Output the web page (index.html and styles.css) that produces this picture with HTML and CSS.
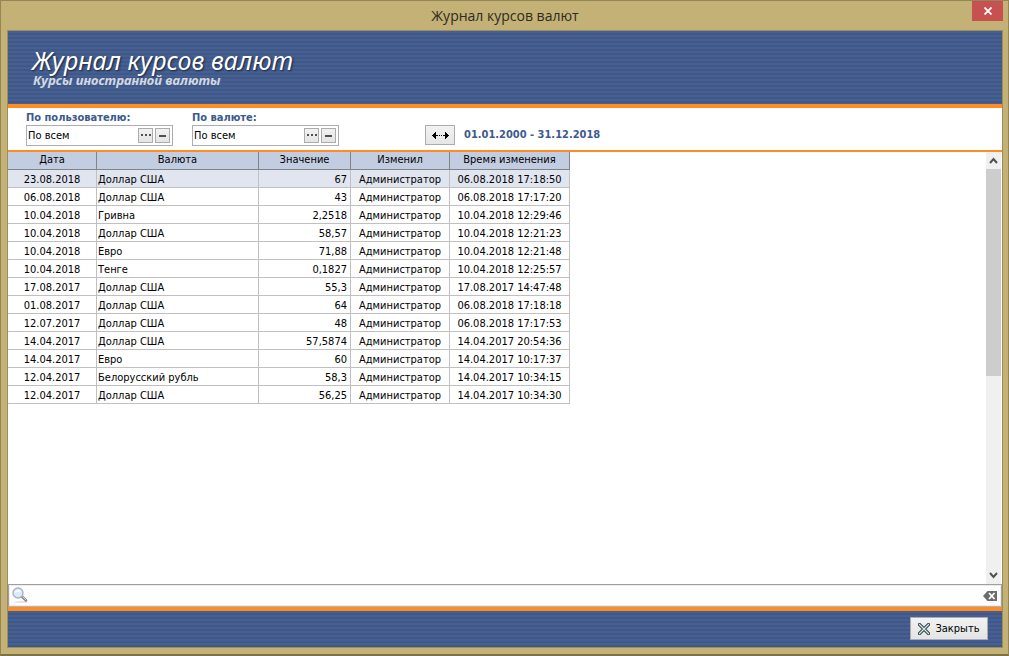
FILE: index.html
```
<!DOCTYPE html>
<html lang="ru">
<head>
<meta charset="utf-8">
<title>Журнал курсов валют</title>
<link rel="stylesheet" href="styles.css">
</head>
<body>
<div class="window">
  <header class="titlebar">
    <h1 class="titlebar-text">Журнал курсов валют</h1>
    <button class="window-close" type="button" aria-label="Закрыть окно">
      <svg width="8" height="8" viewBox="0 0 8 8"><path d="M0.5 0.5L7.5 7.5M7.5 0.5L0.5 7.5" stroke="#fff" stroke-width="1.800" fill="none"/></svg>
    </button>
  </header>
  <main class="client">
    <section class="banner stripes">
      <h2 class="banner-title">Журнал курсов валют</h2>
      <p class="banner-subtitle">Курсы иностранной валюты</p>
    </section>
    <form class="filters">
      <div class="filter">
        <label class="filter-label" for="user">По пользователю:</label>
        <div class="picker">
          <input class="picker-input" id="user" type="text" value="По всем">
          <button class="picker-button" type="button" aria-label="Выбрать пользователя"><svg width="11" height="3" viewBox="0 0 11 3"><path d="M1 0h2v2H1zM5 0h2v2H5zM9 0h2v2H9z" fill="#505050"/></svg></button>
          <button class="picker-button" type="button" aria-label="Сбросить пользователя"><svg width="7" height="2" viewBox="0 0 7 2"><path d="M0 0h7v2H0z" fill="#505050"/></svg></button>
        </div>
      </div>
      <div class="filter">
        <label class="filter-label" for="currency">По валюте:</label>
        <div class="picker">
          <input class="picker-input" id="currency" type="text" value="По всем">
          <button class="picker-button" type="button" aria-label="Выбрать валюту"><svg width="11" height="3" viewBox="0 0 11 3"><path d="M1 0h2v2H1zM5 0h2v2H5zM9 0h2v2H9z" fill="#505050"/></svg></button>
          <button class="picker-button" type="button" aria-label="Сбросить валюту"><svg width="7" height="2" viewBox="0 0 7 2"><path d="M0 0h7v2H0z" fill="#505050"/></svg></button>
        </div>
      </div>
      <div class="period">
        <button class="period-button" type="button" aria-label="Выбрать период"><svg width="17" height="7" viewBox="0 0 17 7" shape-rendering="crispEdges"><path d="M0 3h1v1H0zM1 2h1v3H1zM2 1h1v5H2zM3 0h1v7H3zM4 3h2v1H4zM7 3h1v1H7zM9 3h1v1H9zM11 3h2v1h-2zM13 0h1v7h-1zM14 1h1v5h-1zM15 2h1v3h-1zM16 3h1v1h-1z" fill="#000"/></svg></button>
        <span class="period-text">01.01.2000 - 31.12.2018</span>
      </div>
    </form>
    <section class="grid">
      <div class="grid-body">
        <table class="rates">
          <colgroup><col class="col-date"><col class="col-currency"><col class="col-value"><col class="col-user"><col class="col-time"></colgroup>
          <thead><tr><th>Дата</th><th>Валюта</th><th>Значение</th><th>Изменил</th><th>Время изменения</th></tr></thead>
          <tbody>
            <tr class="selected"><td>23.08.2018</td><td>Доллар США</td><td>67</td><td>Администратор</td><td>06.08.2018 17:18:50</td></tr>
            <tr><td>06.08.2018</td><td>Доллар США</td><td>43</td><td>Администратор</td><td>06.08.2018 17:17:20</td></tr>
            <tr><td>10.04.2018</td><td>Гривна</td><td>2,2518</td><td>Администратор</td><td>10.04.2018 12:29:46</td></tr>
            <tr><td>10.04.2018</td><td>Доллар США</td><td>58,57</td><td>Администратор</td><td>10.04.2018 12:21:23</td></tr>
            <tr><td>10.04.2018</td><td>Евро</td><td>71,88</td><td>Администратор</td><td>10.04.2018 12:21:48</td></tr>
            <tr><td>10.04.2018</td><td>Тенге</td><td>0,1827</td><td>Администратор</td><td>10.04.2018 12:25:57</td></tr>
            <tr><td>17.08.2017</td><td>Доллар США</td><td>55,3</td><td>Администратор</td><td>17.08.2017 14:47:48</td></tr>
            <tr><td>01.08.2017</td><td>Доллар США</td><td>64</td><td>Администратор</td><td>06.08.2018 17:18:18</td></tr>
            <tr><td>12.07.2017</td><td>Доллар США</td><td>48</td><td>Администратор</td><td>06.08.2018 17:17:53</td></tr>
            <tr><td>14.04.2017</td><td>Доллар США</td><td>57,5874</td><td>Администратор</td><td>14.04.2017 20:54:36</td></tr>
            <tr><td>14.04.2017</td><td>Евро</td><td>60</td><td>Администратор</td><td>14.04.2017 10:17:37</td></tr>
            <tr><td>12.04.2017</td><td>Белорусский рубль</td><td>58,3</td><td>Администратор</td><td>14.04.2017 10:34:15</td></tr>
            <tr><td>12.04.2017</td><td>Доллар США</td><td>56,25</td><td>Администратор</td><td>14.04.2017 10:34:30</td></tr>
          </tbody>
        </table>
      </div>
      <div class="scrollbar">
        <button class="scroll-arrow" type="button" aria-label="Прокрутить вверх"><svg width="9" height="7" viewBox="0 0 9 7"><path d="M1 6L4.500 2L8 6" stroke="#505050" stroke-width="2" fill="none"/></svg></button>
        <div class="scroll-track"><div class="scroll-thumb"></div></div>
        <button class="scroll-arrow" type="button" aria-label="Прокрутить вниз"><svg width="9" height="7" viewBox="0 0 9 7"><path d="M1 1L4.500 5L8 1" stroke="#505050" stroke-width="2" fill="none"/></svg></button>
      </div>
    </section>
    <div class="search">
      <label class="search-icon" for="search" aria-label="Поиск"><svg width="17" height="17" viewBox="0 0 17 17"><ellipse cx="9" cy="15" rx="7" ry="1.200" fill="#e6e6e6"/><path d="M10 9.500L14 13.500" stroke="#8a8a8a" stroke-width="2.600" stroke-linecap="round"/><path d="M10.500 9.500L14 13" stroke="#d0d0d0" stroke-width="1"/><circle cx="6" cy="6" r="5" fill="#d8ebfa" stroke="#aab2bc" stroke-width="1.400"/><path d="M2.500 6Q2.500 3 6 2.500Q9.500 3 9.500 5.500Q6 4.500 2.500 6" fill="#f1f8fe"/></svg></label>
      <input class="search-input" id="search" type="text">
      <button class="search-clear" type="button" aria-label="Очистить"><svg width="14" height="10" viewBox="0 0 14 10"><path d="M0 5L4.500 0H14V10H4.500Z" fill="#6c6c6c"/><path d="M6 2L11.500 8M11.500 2L6 8" stroke="#fff" stroke-width="1.800"/></svg></button>
    </div>
    <footer class="footer stripes">
      <button class="close-button" type="button">
        <svg width="12" height="12" viewBox="0 0 12 12"><path d="M1.500 1.500L10.500 10.500M10.500 1.500L1.500 10.500" stroke="#33484c" stroke-width="3.200" stroke-linecap="round"/><path d="M1.500 1.500L10.500 10.500M10.500 1.500L1.500 10.500" stroke="#d5e6e8" stroke-width="1.200" stroke-linecap="round"/></svg>
        Закрыть
      </button>
    </footer>
  </main>
</div>
</body>
</html>
```
FILE: styles.css
```
* { box-sizing: border-box; }

body {
  margin: 0;
  font: 11px/14px "DejaVu Sans Condensed", "DejaVu Sans", sans-serif;
  color: #000;
}

button, input { font: inherit; color: inherit; margin: 0; padding: 0; }
button { display: flex; align-items: center; justify-content: center; }
svg { display: block; flex: none; }

.window {
  display: flex;
  flex-direction: column;
  min-height: 100vh;
  padding: 0 5px 6px 6px;
  background: #c4b175;
  border: 1px solid #938556;
  border-bottom: 2px solid #7c704a;
}

.titlebar {
  display: grid;
  grid-template-columns: 1fr auto 1fr;
  height: 29px;
}

.titlebar-text {
  grid-column: 2;
  margin: 0;
  font: 14px/30px "Open Sans", "Noto Sans", sans-serif;
  color: #2c2a24;
}

.window-close {
  justify-self: end;
  width: 31px;
  height: 20px;
  border: 0;
  background: #c75050;
}

.client {
  flex: 1;
  display: flex;
  flex-direction: column;
  background: #fff;
  border: 1px solid #9c8d5c;
}

.stripes {
  background: repeating-linear-gradient(#466093 0 2px, #405886 2px 4px);
}

.banner {
  height: 77px;
  padding: 15px 24px 0;
  border-bottom: 4px solid #ff8c22;
}

.banner-title, .banner-subtitle {
  margin: 0;
  font-family: "Noto Sans", "Open Sans", sans-serif;
  font-style: italic;
}

.banner-title {
  font-size: 25px;
  line-height: 28px;
  font-weight: 400;
  color: #fff;
  text-shadow: 1px 1px 2px #14233f;
}

.banner-subtitle {
  padding-left: 1px;
  font-size: 13px;
  line-height: 12px;
  font-weight: 700;
  color: #d3d8e2;
}

.filters {
  display: flex;
  gap: 19px;
  height: 44px;
  padding: 3px 18px 0;
  border-bottom: 2px solid #ff8c22;
}

.filter { width: 147px; }

.filter-label, .period-text { font-weight: 700; color: #3b5a8e; }
.filter-label { display: block; white-space: nowrap; }

.picker {
  display: flex;
  align-items: center;
  gap: 2px;
  height: 21px;
  padding: 0 2px 0 1px;
  border: 1px solid #abadb3;
}

.picker-input {
  flex: 1;
  min-width: 0;
  border: 0;
  background: none;
}

.picker-button {
  width: 15px;
  height: 15px;
  border: 1px solid #acacac;
  background: linear-gradient(#f2f2f2, #e4e4e4);
}

.period {
  display: flex;
  align-items: center;
  gap: 9px;
  height: 20px;
  margin: 14px 0 0 67px;
}

.period-button {
  width: 30px;
  height: 20px;
  border: 1px solid #acacac;
  background: linear-gradient(#f2f2f2, #e6e6e6);
}

.grid { flex: 1; display: flex; padding-right: 1px; }
.grid-body { flex: 1; }

.rates {
  width: 562px;
  table-layout: fixed;
  border-collapse: separate;
  border-spacing: 0;
}

.col-date { width: 89px; }
.col-currency { width: 162px; }
.col-value { width: 92px; }
.col-user { width: 99px; }
.col-time { width: 120px; }

.rates th, .rates td {
  height: 18px;
  line-height: 15px;
  white-space: nowrap;
  text-align: center;
}

.rates th {
  padding: 0 1px 2px;
  font-weight: 400;
  background: #c3cde2;
  border: solid #808488;
  border-width: 0 1px 1px 0;
}

.rates td {
  padding: 2px 1px 0;
  border: solid #c0c0c0;
  border-width: 0 1px 1px 0;
}

.rates td:nth-child(2) { text-align: left; }
.rates td:nth-child(3) { padding-right: 3px; text-align: right; }
.rates .selected { background: #e1e5f0; }

.scrollbar {
  display: flex;
  flex-direction: column;
  width: 15px;
  background: #f0f0f0;
}

.scroll-arrow { height: 17px; border: 0; background: none; }
.scroll-track { flex: 1; }
.scroll-thumb { height: 52%; background: #cdcdcd; }

.search {
  display: flex;
  align-items: center;
  height: 23px;
  padding: 0 4px 0 3px;
  border: 1px solid #a0a0a0;
  border-bottom-color: #b4b4b4;
  box-shadow: inset 0 0 0 1px #ececec;
}

.search-input { flex: 1; border: 0; background: none; outline: 0; }
.search-clear { border: 0; background: none; }

.footer {
  display: flex;
  justify-content: flex-end;
  height: 40px;
  padding: 6px 14px 0 0;
  border-top: 4px solid #ff8c22;
}

.close-button {
  gap: 5px;
  width: 78px;
  height: 23px;
  border: 1px solid #acacac;
  background: linear-gradient(#f2f2f2, #e4e4e4);
}
```
